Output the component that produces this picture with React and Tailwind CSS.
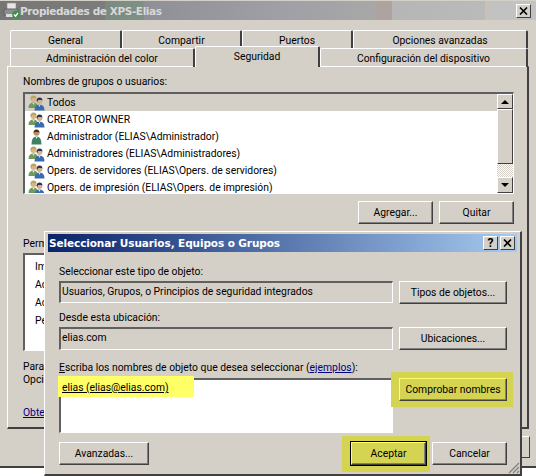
import React from "react";

const font = { fontFamily: 'Roboto, "Liberation Sans", Arial, sans-serif' };
const titleFont = { fontFamily: '"DejaVu Sans", sans-serif' };

function GroupIcon() {
  return (
    <svg width="17" height="16" viewBox="0 0 17 16" className="shrink-0">
      <circle cx="5.5" cy="4" r="3" fill="#d8b48c" />
      <path d="M2.5 4 Q2.5 0.5 5.5 0.5 Q8.5 0.5 8.5 3.5 L7 3 Q5 3.5 4 2.5 L3.5 5 Z" fill="#b5a85a" />
      <path d="M0.5 13 Q0.5 7.5 5.5 7.5 Q10 7.5 10 13 Z" fill="#6f9a5c" />
      <path d="M4.5 8 L5.5 10 L6.5 8 Z" fill="#e6e6d8" />
      <circle cx="11.5" cy="6" r="2.9" fill="#d9b08c" />
      <path d="M8.6 6 Q8.6 2.5 11.5 2.5 Q14.4 2.5 14.4 5.5 L13 5 L10 5 L9.4 7 Z" fill="#2c3550" />
      <path d="M6.5 15.5 Q6.5 9.5 11.5 9.5 Q16.5 9.5 16.5 15.5 Z" fill="#3a6bad" />
      <path d="M10.5 9.8 L11.5 12 L12.5 9.8 Z" fill="#dfe8f4" />
    </svg>
  );
}

function UserIcon() {
  return (
    <svg width="17" height="16" viewBox="0 0 17 16" className="shrink-0">
      <circle cx="8.5" cy="3.8" r="3" fill="#b88c64" />
      <path d="M5.6 4 Q5.6 0.5 8.5 0.5 Q11.4 0.5 11.4 4 L10.4 3 L6.8 3 Z" fill="#3a3226" />
      <path d="M3.5 15.5 Q3.5 7.5 8.5 7.5 Q13.5 7.5 13.5 15.5 Z" fill="#3f7f62" />
      <path d="M7.5 8 L8.5 10 L9.5 8 Z" fill="#e6efe8" />
    </svg>
  );
}

function CloseGlyph() {
  return (
    <svg width="9" height="8" viewBox="0 0 9 8">
      <path d="M1 0.5 L8 7.5 M8 0.5 L1 7.5" stroke="#000" strokeWidth="1.6" fill="none" />
    </svg>
  );
}

function Tab({ className = "", children }) {
  return (
    <div className={"flex items-center justify-center pt-[2px] border-t border-l border-r-2 border-t-white border-l-white border-r-[#404040] rounded-t-[2px] " + className}>
      {children}
    </div>
  );
}

function WinButton({ className = "", children }) {
  return (
    <div className={"flex items-center justify-center whitespace-nowrap h-[23px] border border-r-[#404040] border-b-[#404040] shadow-[inset_-1px_-1px_0_#808080] " + className}>
      {children}
    </div>
  );
}

function CaptionButton({ children }) {
  return (
    <div className="flex items-center justify-center w-[15px] h-[14px] bg-[#d4d0c8] border border-t-white border-l-white border-r-[#404040] border-b-[#404040] text-[12px] font-bold text-black">
      {children}
    </div>
  );
}

function Sunken({ className = "", children }) {
  return (
    <div className={"border-t-2 border-l-2 border-r border-b border-t-[#606060] border-l-[#606060] border-r-white border-b-white " + className}>
      {children}
    </div>
  );
}

const principals = [
  ["g", "CREATOR OWNER"],
  ["u", "Administrador (ELIAS\\Administrador)"],
  ["g", "Administradores (ELIAS\\Administradores)"],
  ["g", "Opers. de servidores (ELIAS\\Opers. de servidores)"],
  ["g", "Opers. de impresión (ELIAS\\Opers. de impresión)"],
];

const plain = "border-t-white border-l-white";
const marked = "bg-[#d4d452] border-t-[#ffff66] border-l-[#ffff66]";

export default function App() {
  return (
    <div className="relative w-[536px] h-[476px] overflow-hidden bg-white text-[10.35px] leading-[14px] text-black" style={font}>
      {/* Back window */}
      <div className="h-[468px] bg-[#d4d0c8] border-b-2 border-b-[#404040] flex flex-col">
        <div className="mt-px h-[19px] flex items-center pl-[3px] pr-[5px] bg-[linear-gradient(90deg,#767676_0,#7c7c7c_105px,#7a8a80_105px,#7f9186_144px,#8f8f96_144px,#a0a0a6_290px,#a8a8a8_376px,#ada49f_376px,#ada49f_392px,#b6b6b6_392px,#bababa_485px,#c4c2ba_485px,#c4c2ba_492px,#c2c2c2_492px)]">
          <svg width="17" height="17" viewBox="0 0 17 17" className="shrink-0">
            <rect x="4" y="1" width="9" height="6" fill="#e6e6e6" stroke="#8a8a8a" strokeWidth="0.6" />
            <rect x="1" y="7" width="14" height="6" rx="1" fill="#8d8d8d" stroke="#4a4a4a" strokeWidth="0.6" />
            <rect x="3" y="12" width="9" height="3" fill="#dcdcdc" />
            <circle cx="13" cy="12.5" r="3.8" fill="#2f9a3e" />
            <path d="M11 12.5 L12.6 14.2 L15 10.8" stroke="#fff" fill="none" strokeWidth="1.3" />
          </svg>
          <span className="text-[10.5px] tracking-[-0.4px] font-bold text-[#d8d8d8]" style={titleFont}>Propiedades de XPS-Elias</span>
          <div className="ml-auto mt-px">
            <CaptionButton><CloseGlyph /></CaptionButton>
          </div>
        </div>

        <div className="pl-[10px] pr-[8px] mt-[10px] h-[37px]">
          <div className="flex h-[18px]">
            <Tab className="w-[112px]">General</Tab>
            <Tab className="w-[120px]">Compartir</Tab>
            <Tab className="w-[111px]">Puertos</Tab>
            <Tab className="w-[175px]">Opciones avanzadas</Tab>
          </div>
          <div className="flex h-[19px] relative">
            <Tab className="w-[185px]">Administración del color</Tab>
            <Tab className="w-[125px] h-[21px] -mt-[2px] pb-[3px] bg-[#d4d0c8] z-10">Seguridad</Tab>
            <Tab className="w-[208px]">Configuración del dispositivo</Tab>
          </div>
        </div>

        <div className="ml-[7px] w-[522px] h-[363px] -mt-px border border-t-white border-l-white border-r-2 border-r-[#404040] border-b-2 border-b-[#404040] pl-[15px] pr-[13px] pt-[8px]">
          <div className="h-[14px]">Nombres de grupos o usuarios:</div>
          <Sunken className="mt-[3px] h-[102px] bg-white flex overflow-hidden">
            <div className="flex-1 overflow-hidden">
              <div className="h-[17px] bg-[#d4d0c8] flex items-center pl-[3px] gap-[2px]">
                <GroupIcon />
                <span>Todos</span>
              </div>
              {principals.map(([kind, name]) => (
                <div key={name} className="h-[17px] flex items-center pl-[3px] gap-[2px] whitespace-nowrap">
                  {kind === "g" ? <GroupIcon /> : <UserIcon />}
                  <span>{name}</span>
                </div>
              ))}
            </div>
            <div className="w-[16px] flex flex-col">
              <div className="h-[15px] bg-[#d4d0c8] border border-t-white border-l-white border-r-[#404040] border-b-[#404040] flex items-center justify-center">
                <div className="w-0 h-0 border-x-[4px] border-x-transparent border-b-[4px] border-b-black" />
              </div>
              <div className="h-[55px] bg-[#d4d0c8] border border-t-white border-l-white border-r-[#404040] border-b-[#404040]" />
              <div className="flex-1 bg-[repeating-conic-gradient(#d4d0c8_0_25%,#ffffff_0_50%)] bg-[length:2px_2px]" />
              <div className="h-[16px] bg-[#d4d0c8] border border-t-white border-l-white border-r-[#404040] border-b-[#404040] flex items-center justify-center">
                <div className="w-0 h-0 border-x-[4px] border-x-transparent border-t-[4px] border-t-black" />
              </div>
            </div>
          </Sunken>
          <div className="mt-[7px] flex justify-end gap-[6px]">
            <WinButton className={"w-[75px] " + plain}>Agregar...</WinButton>
            <WinButton className={"w-[75px] " + plain}>Quitar</WinButton>
          </div>
          <div className="mt-[13px] h-[14px]">Permisos</div>
          <Sunken className="mt-[2px] h-[98px] bg-white pl-[10px] pt-[3px] leading-[18px]">
            <div>Imprimir</div>
            <div>Administrar</div>
            <div>Administrar</div>
            <div>Permisos</div>
          </Sunken>
          <div className="mt-[9px] leading-[13px]">
            <div>Para</div>
            <div>Opciones</div>
          </div>
          <div className="mt-[20px] text-[#000080] underline">Obtener</div>
        </div>

        <div className="ml-auto mr-[6px] mt-[7px] w-[10px] h-[22px] bg-[#d4d0c8] border-t border-r border-b border-t-white border-r-[#404040] border-b-[#404040]" />
      </div>

      {/* Foreground dialog */}
      <div className="absolute left-[44px] top-[231px] w-[478px] h-[245px] bg-[#d4d0c8] border border-t-white border-l-white border-r-2 border-r-[#404040] border-b-2 border-b-[#404040] pt-[2px] px-[3px]">
        <div className="h-[18px] flex items-center pl-[1px] pr-[2px] bg-[linear-gradient(90deg,#0a246a,#a6caf0)]">
          <span className="text-[10.5px] tracking-[-0.1px] font-bold text-white" style={titleFont}>Seleccionar Usuarios, Equipos o Grupos</span>
          <div className="ml-auto flex gap-[2px]">
            <CaptionButton>?</CaptionButton>
            <CaptionButton><CloseGlyph /></CaptionButton>
          </div>
        </div>

        <div className="pl-[11px] pr-[10px]">
          <div className="mt-[13px] h-[14px]">Seleccionar este tipo de objeto:</div>
          <div className="mt-[2px] flex items-start gap-[6px]">
            <Sunken className="w-[334px] h-[22px] pl-[1px] pb-[2px] flex items-center">Usuarios, Grupos, o Principios de seguridad integrados</Sunken>
            <WinButton className={"flex-1 " + plain}>Tipos de objetos...</WinButton>
          </div>
          <div className="mt-[7px] h-[14px]">Desde esta ubicación:</div>
          <div className="mt-[2px] flex items-start gap-[6px]">
            <Sunken className="w-[334px] h-[23px] pl-[1px] pb-[2px] flex items-center">elias.com</Sunken>
            <WinButton className={"flex-1 " + plain}>Ubicaciones...</WinButton>
          </div>
          <div className="mt-[11px] h-[14px]">
            <span className="underline">E</span>scriba los nombres de objeto que desea seleccionar (<span className="text-[#000080] underline">ejemplos</span>):
          </div>
          <div className="mt-[3px] flex items-start gap-[6px]">
            <Sunken className="relative w-[334px] h-[55px] bg-white pl-[1px] pt-[1px]">
              <div className="absolute -left-[3px] -top-[4px] w-[136px] h-[21px] bg-[#ffff66]" />
              <span className="relative underline">elias (elias@elias.com)</span>
            </Sunken>
            <div className="flex-1 relative">
              <div className="absolute -left-[8px] -top-[6px] -right-[6px] h-[35px] bg-[#d4d452]" />
              <WinButton className={"relative " + marked}>Comprobar nombres</WinButton>
            </div>
          </div>
          <div className="mt-[9px] flex items-start">
            <WinButton className={"w-[90px] " + plain}>Avanzadas...</WinButton>
            <div className="ml-auto flex gap-[6px]">
              <div className="relative">
                <div className="absolute -left-[9px] -top-[6px] -right-[4px] -bottom-[7px] bg-[#d4d452]" />
                <WinButton className={"relative w-[75px] outline outline-black " + marked}>Aceptar</WinButton>
              </div>
              <WinButton className={"w-[75px] " + plain}>Cancelar</WinButton>
            </div>
          </div>
        </div>

        <svg width="12" height="12" viewBox="0 0 12 12" className="absolute right-0 bottom-0">
          <path d="M11 1 L1 11 M11 5 L5 11 M11 9 L9 11" stroke="#808080" strokeWidth="1.2" />
        </svg>
      </div>
    </div>
  );
}
